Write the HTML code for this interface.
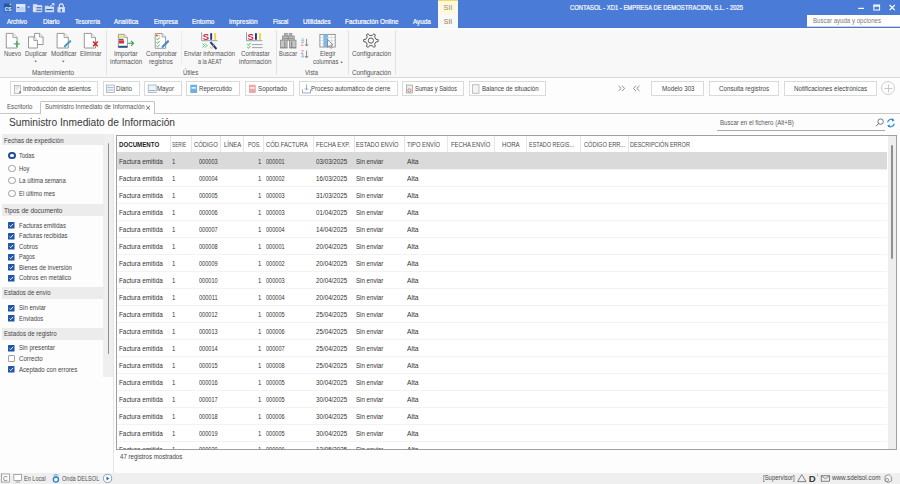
<!DOCTYPE html>
<html><head><meta charset="utf-8"><style>
html,body{margin:0;padding:0;}
body{width:900px;height:484px;overflow:hidden;position:relative;background:#fdfdfd;font-family:"Liberation Sans", sans-serif;}
.t{position:absolute;white-space:pre;line-height:1;transform-origin:0 0;}
svg{position:absolute;overflow:visible}
</style></head><body>
<div style="position:absolute;left:0px;top:0px;width:900px;height:27.5px;background:#4a7bd6"></div><div style="position:absolute;left:438.3px;top:0px;width:19.5px;height:1.2px;background:#f3d65a"></div><div style="position:absolute;left:438.3px;top:1.2px;width:19.5px;height:13.8px;background:#fdf8e2"></div><div style="position:absolute;left:438.3px;top:15px;width:19.5px;height:13px;background:#f9f9f9"></div><div style="position:absolute;left:807px;top:15px;width:93px;height:12px;background:#fff;border-bottom:1px solid #d0d0d0;box-sizing:border-box"></div><div style="position:absolute;left:0px;top:27.5px;width:900px;height:49.5px;background:#f8f8f8"></div><div style="position:absolute;left:0px;top:27.5px;width:900px;height:2px;background:#fcfcfc"></div><div style="position:absolute;left:0px;top:77px;width:900px;height:1px;background:#d8d8d8"></div><div style="position:absolute;left:105.5px;top:30px;width:1px;height:45px;background:#e2e2e2"></div><div style="position:absolute;left:275.8px;top:30px;width:1px;height:45px;background:#e2e2e2"></div><div style="position:absolute;left:347.6px;top:30px;width:1px;height:45px;background:#e2e2e2"></div><div style="position:absolute;left:394.6px;top:30px;width:1px;height:45px;background:#e2e2e2"></div><div style="position:absolute;left:180.6px;top:31px;width:1px;height:33px;background:#ececec"></div><div style="position:absolute;left:10px;top:81.3px;width:88.2px;height:14.5px;background:#fff;border:1px solid #dadada;box-sizing:border-box"></div><div style="position:absolute;left:102.9px;top:81.3px;width:37.099999999999994px;height:14.5px;background:#fff;border:1px solid #dadada;box-sizing:border-box"></div><div style="position:absolute;left:144.4px;top:81.3px;width:37.400000000000006px;height:14.5px;background:#fff;border:1px solid #dadada;box-sizing:border-box"></div><div style="position:absolute;left:186.2px;top:81.3px;width:54.20000000000002px;height:14.5px;background:#fff;border:1px solid #dadada;box-sizing:border-box"></div><div style="position:absolute;left:244.9px;top:81.3px;width:49.49999999999997px;height:14.5px;background:#fff;border:1px solid #dadada;box-sizing:border-box"></div><div style="position:absolute;left:299.3px;top:81.3px;width:98.5px;height:14.5px;background:#fff;border:1px solid #dadada;box-sizing:border-box"></div><div style="position:absolute;left:402.2px;top:81.3px;width:62.19999999999999px;height:14.5px;background:#fff;border:1px solid #dadada;box-sizing:border-box"></div><div style="position:absolute;left:468.9px;top:81.3px;width:76.70000000000005px;height:14.5px;background:#fff;border:1px solid #dadada;box-sizing:border-box"></div><div style="position:absolute;left:651px;top:81.3px;width:53.299999999999955px;height:14.5px;background:#fff;border:1px solid #dadada;box-sizing:border-box"></div><div style="position:absolute;left:709px;top:81.3px;width:70.29999999999995px;height:14.5px;background:#fff;border:1px solid #dadada;box-sizing:border-box"></div><div style="position:absolute;left:783.7px;top:81.3px;width:93.0px;height:14.5px;background:#fff;border:1px solid #dadada;box-sizing:border-box"></div><div style="position:absolute;left:881px;top:81px;width:14px;height:14px;border:1px solid #cfcfcf;border-radius:50%;box-sizing:border-box"></div><div style="position:absolute;left:0px;top:113px;width:900px;height:1px;background:#c8c8c8"></div><div style="position:absolute;left:40.4px;top:101.2px;width:115px;height:12.8px;background:#fff;border:1px solid #c4c4c4;border-bottom:none;box-sizing:border-box;border-radius:1.5px 1.5px 0 0"></div><div style="position:absolute;left:716.7px;top:130px;width:168.2px;height:1px;background:#aaaaaa"></div><div style="position:absolute;left:113.3px;top:134px;width:1px;height:338.5px;background:#e6e6e6"></div><div style="position:absolute;left:103.4px;top:134px;width:9.9px;height:242.7px;background:#efefef"></div><div style="position:absolute;left:107.6px;top:142.8px;width:1.7px;height:211.7px;background:#909090;border-radius:1px"></div><div style="position:absolute;left:2px;top:133.9px;width:101.5px;height:11.5px;background:#ececec"></div><div style="position:absolute;left:2px;top:203.9px;width:101.5px;height:12.199999999999989px;background:#ececec"></div><div style="position:absolute;left:2px;top:286.9px;width:101.5px;height:12.200000000000045px;background:#ececec"></div><div style="position:absolute;left:2px;top:327.7px;width:101.5px;height:12.199999999999989px;background:#ececec"></div><div style="position:absolute;left:8.4px;top:151.9px;width:7.2px;height:7.2px;border-radius:50%;border:2.2px solid #1f4f9e;box-sizing:border-box;background:#fff"></div><div style="position:absolute;left:8.4px;top:164.8px;width:7.2px;height:7.2px;border-radius:50%;border:1px solid #9a9a9a;box-sizing:border-box;background:#fff"></div><div style="position:absolute;left:8.4px;top:177.20000000000002px;width:7.2px;height:7.2px;border-radius:50%;border:1px solid #9a9a9a;box-sizing:border-box;background:#fff"></div><div style="position:absolute;left:8.4px;top:190.1px;width:7.2px;height:7.2px;border-radius:50%;border:1px solid #9a9a9a;box-sizing:border-box;background:#fff"></div><svg style="left:8.4px;top:222.05px" width="6.5" height="6.5" viewBox="0 0 13 13"><rect x="0" y="0" width="13" height="13" rx="1" fill="#1f55a8"/><path d="M3 6.8 L5.5 9.2 L10 3.8" stroke="#fff" stroke-width="1.8" fill="none"/></svg><svg style="left:8.4px;top:232.75px" width="6.5" height="6.5" viewBox="0 0 13 13"><rect x="0" y="0" width="13" height="13" rx="1" fill="#1f55a8"/><path d="M3 6.8 L5.5 9.2 L10 3.8" stroke="#fff" stroke-width="1.8" fill="none"/></svg><svg style="left:8.4px;top:243.25px" width="6.5" height="6.5" viewBox="0 0 13 13"><rect x="0" y="0" width="13" height="13" rx="1" fill="#1f55a8"/><path d="M3 6.8 L5.5 9.2 L10 3.8" stroke="#fff" stroke-width="1.8" fill="none"/></svg><svg style="left:8.4px;top:253.75px" width="6.5" height="6.5" viewBox="0 0 13 13"><rect x="0" y="0" width="13" height="13" rx="1" fill="#1f55a8"/><path d="M3 6.8 L5.5 9.2 L10 3.8" stroke="#fff" stroke-width="1.8" fill="none"/></svg><svg style="left:8.4px;top:264.25px" width="6.5" height="6.5" viewBox="0 0 13 13"><rect x="0" y="0" width="13" height="13" rx="1" fill="#1f55a8"/><path d="M3 6.8 L5.5 9.2 L10 3.8" stroke="#fff" stroke-width="1.8" fill="none"/></svg><svg style="left:8.4px;top:274.75px" width="6.5" height="6.5" viewBox="0 0 13 13"><rect x="0" y="0" width="13" height="13" rx="1" fill="#1f55a8"/><path d="M3 6.8 L5.5 9.2 L10 3.8" stroke="#fff" stroke-width="1.8" fill="none"/></svg><svg style="left:8.4px;top:304.85px" width="6.5" height="6.5" viewBox="0 0 13 13"><rect x="0" y="0" width="13" height="13" rx="1" fill="#1f55a8"/><path d="M3 6.8 L5.5 9.2 L10 3.8" stroke="#fff" stroke-width="1.8" fill="none"/></svg><svg style="left:8.4px;top:315.45px" width="6.5" height="6.5" viewBox="0 0 13 13"><rect x="0" y="0" width="13" height="13" rx="1" fill="#1f55a8"/><path d="M3 6.8 L5.5 9.2 L10 3.8" stroke="#fff" stroke-width="1.8" fill="none"/></svg><svg style="left:8.4px;top:344.85px" width="6.5" height="6.5" viewBox="0 0 13 13"><rect x="0" y="0" width="13" height="13" rx="1" fill="#1f55a8"/><path d="M3 6.8 L5.5 9.2 L10 3.8" stroke="#fff" stroke-width="1.8" fill="none"/></svg><div style="position:absolute;left:8.4px;top:355.25px;width:6.5px;height:6.5px;border:1px solid #a0a0a0;box-sizing:border-box;background:#fff;border-radius:1px"></div><svg style="left:8.4px;top:366.05px" width="6.5" height="6.5" viewBox="0 0 13 13"><rect x="0" y="0" width="13" height="13" rx="1" fill="#1f55a8"/><path d="M3 6.8 L5.5 9.2 L10 3.8" stroke="#fff" stroke-width="1.8" fill="none"/></svg><div style="position:absolute;left:115.8px;top:134.8px;width:781px;height:315px;background:#fff;border:1px solid #a0a0a0;box-sizing:border-box"></div><div style="position:absolute;left:887.5px;top:135.8px;width:8.3px;height:313px;background:#eeeeee"></div><div style="position:absolute;left:891.2px;top:144.8px;width:1.7px;height:113.8px;background:#909090;border-radius:1px"></div><div style="position:absolute;left:169.6px;top:136px;width:1px;height:16px;background:#e6e6e6"></div><div style="position:absolute;left:190.6px;top:136px;width:1px;height:16px;background:#e6e6e6"></div><div style="position:absolute;left:220.2px;top:136px;width:1px;height:16px;background:#e6e6e6"></div><div style="position:absolute;left:243.4px;top:136px;width:1px;height:16px;background:#e6e6e6"></div><div style="position:absolute;left:262.9px;top:136px;width:1px;height:16px;background:#e6e6e6"></div><div style="position:absolute;left:313.3px;top:136px;width:1px;height:16px;background:#e6e6e6"></div><div style="position:absolute;left:354px;top:136px;width:1px;height:16px;background:#e6e6e6"></div><div style="position:absolute;left:404px;top:136px;width:1px;height:16px;background:#e6e6e6"></div><div style="position:absolute;left:447.1px;top:136px;width:1px;height:16px;background:#e6e6e6"></div><div style="position:absolute;left:494.4px;top:136px;width:1px;height:16px;background:#e6e6e6"></div><div style="position:absolute;left:526.2px;top:136px;width:1px;height:16px;background:#e6e6e6"></div><div style="position:absolute;left:579.6px;top:136px;width:1px;height:16px;background:#e6e6e6"></div><div style="position:absolute;left:627.8px;top:136px;width:1px;height:16px;background:#e6e6e6"></div><div style="position:absolute;left:117.3px;top:152px;width:770.2px;height:1px;background:#e8e8e8"></div><div style="position:absolute;left:117.3px;top:152.3px;width:770.2px;height:17px;background:#dadada"></div><div style="position:absolute;left:117.3px;top:169.3px;width:770.2px;height:1px;background:#f3f3f3"></div><div style="position:absolute;left:117.3px;top:186.3px;width:770.2px;height:1px;background:#f3f3f3"></div><div style="position:absolute;left:117.3px;top:203.3px;width:770.2px;height:1px;background:#f3f3f3"></div><div style="position:absolute;left:117.3px;top:220.3px;width:770.2px;height:1px;background:#f3f3f3"></div><div style="position:absolute;left:117.3px;top:237.3px;width:770.2px;height:1px;background:#f3f3f3"></div><div style="position:absolute;left:117.3px;top:254.3px;width:770.2px;height:1px;background:#f3f3f3"></div><div style="position:absolute;left:117.3px;top:271.3px;width:770.2px;height:1px;background:#f3f3f3"></div><div style="position:absolute;left:117.3px;top:288.3px;width:770.2px;height:1px;background:#f3f3f3"></div><div style="position:absolute;left:117.3px;top:305.3px;width:770.2px;height:1px;background:#f3f3f3"></div><div style="position:absolute;left:117.3px;top:322.3px;width:770.2px;height:1px;background:#f3f3f3"></div><div style="position:absolute;left:117.3px;top:339.3px;width:770.2px;height:1px;background:#f3f3f3"></div><div style="position:absolute;left:117.3px;top:356.3px;width:770.2px;height:1px;background:#f3f3f3"></div><div style="position:absolute;left:117.3px;top:373.3px;width:770.2px;height:1px;background:#f3f3f3"></div><div style="position:absolute;left:117.3px;top:390.3px;width:770.2px;height:1px;background:#f3f3f3"></div><div style="position:absolute;left:117.3px;top:407.3px;width:770.2px;height:1px;background:#f3f3f3"></div><div style="position:absolute;left:117.3px;top:424.3px;width:770.2px;height:1px;background:#f3f3f3"></div><div style="position:absolute;left:117.3px;top:441.3px;width:770.2px;height:1px;background:#f3f3f3"></div><div style="position:absolute;left:0px;top:472.5px;width:900px;height:11.5px;background:#efefef"></div><svg style="left:0;top:0" width="900" height="484" viewBox="0 0 900 484"><path d="M6.3 33.4 H12.900000000000002 L17.1 37.6 V48 H6.3 Z" fill="#fff" stroke="#858585" stroke-width="0.85"/><path d="M12.900000000000002 33.4 V37.6 H17.1" fill="#f0f0f0" stroke="#858585" stroke-width="0.7"/><path d="M16.8 40.9 V46.9 M13.8 43.9 H19.8" stroke="#4aa86a" stroke-width="1.4"/><path d="M34.6 33.4 H39.5 L43.1 37.0 V44.5 H34.6 Z" fill="#fff" stroke="#858585" stroke-width="0.85"/><path d="M39.5 33.4 V37.0 H43.1" fill="#f0f0f0" stroke="#858585" stroke-width="0.7"/><path d="M28.5 36.9 H33.8 L37.4 40.5 V48 H28.5 Z" fill="#fff" stroke="#858585" stroke-width="0.85"/><path d="M33.8 36.9 V40.5 H37.4" fill="#f0f0f0" stroke="#858585" stroke-width="0.7"/><path d="M57.1 33.4 H64.1 L68.3 37.6 V48 H57.1 Z" fill="#fff" stroke="#858585" stroke-width="0.85"/><path d="M64.1 33.4 V37.6 H68.3" fill="#f0f0f0" stroke="#858585" stroke-width="0.7"/><path d="M64.9 46.3 L70.2 41.2" stroke="#4a9ac8" stroke-width="2.2" stroke-linecap="round"/><path d="M84.3 33.4 H91.3 L95.5 37.6 V48 H84.3 Z" fill="#fff" stroke="#858585" stroke-width="0.85"/><path d="M91.3 33.4 V37.6 H95.5" fill="#f0f0f0" stroke="#858585" stroke-width="0.7"/><path d="M93 41.5 L97.8 46.3 M97.8 41.5 L93 46.3" stroke="#d0202a" stroke-width="1.5"/><path d="M118.4 34.4 H124.2 L127.4 37.6 V47.4 H118.4 Z" fill="#fff" stroke="#8a8a8a" stroke-width="0.85"/><path d="M124.2 34.4 V37.6 H127.4" fill="#f0f0f0" stroke="#8a8a8a" stroke-width="0.7"/><rect x="119" y="35.6" width="5.5" height="2" fill="#f3d64a"/><rect x="119" y="38.8" width="4.5" height="1" fill="#1d3e7a"/><rect x="119" y="40.3" width="5" height="3.2" fill="#d43040"/><rect x="118.4" y="45.8" width="9" height="1.8" fill="#1f5588"/><path d="M127.8 43.3 H133.6 M131 40.8 L133.6 43.3 L131 45.8" stroke="#3aa040" stroke-width="1.1" fill="none"/><path d="M155.2 33.5 H162.1 L165.6 37.0 V48.3 H155.2 Z" fill="#fff" stroke="#8a8a8a" stroke-width="0.85"/><path d="M162.1 33.5 V37.0 H165.6" fill="#f0f0f0" stroke="#8a8a8a" stroke-width="0.7"/><circle cx="156.9" cy="35.5" r="0.9" fill="#d03040"/><rect x="158.5" y="34.6" width="1.6" height="1.8" fill="#f0d040"/><path d="M156.4 38.8 L157.6 39.8 L159.6 37.599999999999994" stroke="#3a9a4a" stroke-width="0.9" fill="none"/><path d="M156.4 42.3 L157.6 43.3 L159.6 41.099999999999994" stroke="#3a9a4a" stroke-width="0.9" fill="none"/><path d="M156.4 45.8 L157.6 46.8 L159.6 44.599999999999994" stroke="#3a9a4a" stroke-width="0.9" fill="none"/><path d="M162.6 46.8 L168 41.4" stroke="#4a8ac8" stroke-width="2.2" stroke-linecap="round"/><path d="M201.7 32.4 V40.7 H217.5" stroke="#8aa0b8" stroke-width="1" fill="none"/><text x="202.79999999999998" y="40.0" font-family="Liberation Sans" font-weight="700" font-size="9.5" fill="#d42a3a">S</text><rect x="210.2" y="33.199999999999996" width="1.9" height="6.6" fill="#1d3a80"/><rect x="214.2" y="33.199999999999996" width="1.9" height="6.6" fill="#f2d43c"/><path d="M202.5 43.5 L204.5 45.5 L202.5 47.5 M205 43.5 L207 45.5 L205 47.5" stroke="#5ab05a" stroke-width="0.9" fill="none"/><path d="M210.5 42.2 L216.5 49" stroke="#1d3a80" stroke-width="2"/><path d="M213 47.5 Q210 49.5 210.3 46.5" stroke="#e0b040" stroke-width="0.8" fill="none"/><path d="M215.5 43 L211.5 48" stroke="#f0d060" stroke-width="0.6"/><path d="M246.5 32.4 V40.7 H262.3" stroke="#8aa0b8" stroke-width="1" fill="none"/><text x="247.6" y="40.0" font-family="Liberation Sans" font-weight="700" font-size="9.5" fill="#d42a3a">S</text><rect x="255" y="33.199999999999996" width="1.9" height="6.6" fill="#1d3a80"/><rect x="259" y="33.199999999999996" width="1.9" height="6.6" fill="#f2d43c"/><path d="M247.3 44.2 L248.5 45.2 L250.6 42.900000000000006" stroke="#3aa04a" stroke-width="0.9" fill="none"/><path d="M252 44.6 H262.5" stroke="#8a8a8a" stroke-width="0.8"/><path d="M247.3 47.2 L248.5 48.2 L250.6 45.900000000000006" stroke="#3aa04a" stroke-width="0.9" fill="none"/><path d="M252 47.6 H262.5" stroke="#8a8a8a" stroke-width="0.8"/><g fill="#c4c4c4" stroke="#8a8a8a" stroke-width="0.8"><rect x="284.6" y="33.4" width="2.6" height="2.6"/><rect x="289.2" y="33.4" width="2.6" height="2.6"/><rect x="282.4" y="36" width="5.6" height="4.2"/><rect x="288.6" y="36" width="5.6" height="4.2"/><rect x="280.5" y="40.2" width="6.6" height="7.8"/><rect x="289.6" y="40.2" width="6.4" height="7.8"/></g><g fill="#8a8a8a"><rect x="284.2" y="41.5" width="1.2" height="6"/><rect x="291" y="41.5" width="1.2" height="6"/><rect x="283" y="37.8" width="4.5" height="1"/><rect x="289.2" y="37.8" width="4.5" height="1"/><rect x="280.5" y="47.2" width="6.6" height="0.9"/><rect x="289.6" y="47.2" width="6.4" height="0.9"/></g><text x="300.9" y="42.4" font-family="Liberation Sans" font-size="4.6" fill="#5aa0d8">A</text><text x="301.1" y="46.4" font-family="Liberation Sans" font-size="4.6" fill="#e07070">Z</text><path d="M306.6 38.9 V46 M305 44.3 L306.6 46.1 L308.2 44.3" stroke="#666" stroke-width="0.75" fill="none"/><text x="301.1" y="54.2" font-family="Liberation Sans" font-size="4.6" fill="#e07070">Z</text><text x="300.9" y="58.2" font-family="Liberation Sans" font-size="4.6" fill="#5aa0d8">A</text><path d="M306.6 50.6 V57.7 M305 56 L306.6 57.8 L308.2 56" stroke="#666" stroke-width="0.75" fill="none"/><path d="M34.4 60.8 H37 L35.7 62.2 Z M62 60.8 H64.6 L63.3 62.2 Z M340.3 61.8 H342.9 L341.6 63.2 Z" fill="#555"/><rect x="319.9" y="34.4" width="15.3" height="12.6" fill="#fff" stroke="#8a8a8a" stroke-width="0.9"/><rect x="323.3" y="34.4" width="4.7" height="12.6" fill="#7ab6ea"/><path d="M319.9 37.5 H335.2" stroke="#b5c5d5" stroke-width="0.5"/><path d="M319.9 40.6 H335.2" stroke="#b5c5d5" stroke-width="0.5"/><path d="M319.9 43.8 H335.2" stroke="#b5c5d5" stroke-width="0.5"/><path d="M323.3 34.4 V47" stroke="#b5c5d5" stroke-width="0.5"/><path d="M328 34.4 V47" stroke="#b5c5d5" stroke-width="0.5"/><path d="M331.6 34.4 V47" stroke="#b5c5d5" stroke-width="0.5"/><path d="M327.6 39.6 V47.2 L329.4 45.6 L330.8 48.3 L332 47.7 L330.7 45.1 L333 45 Z" fill="#fff" stroke="#555" stroke-width="0.6"/><path d="M375.92 39.25 L378.13 39.56 L378.13 41.64 L375.92 41.95 L374.58 44.28 L375.41 46.34 L373.61 47.38 L372.25 45.62 L369.55 45.62 L368.19 47.38 L366.39 46.34 L367.22 44.28 L365.88 41.95 L363.67 41.64 L363.67 39.56 L365.88 39.25 L367.22 36.92 L366.39 34.86 L368.19 33.82 L369.55 35.58 L372.25 35.58 L373.61 33.82 L375.41 34.86 L374.58 36.92 Z" fill="none" stroke="#5a5a5a" stroke-width="1"/><circle cx="370.9" cy="40.6" r="2.6" fill="none" stroke="#5a5a5a" stroke-width="1"/></svg><svg style="left:0;top:0" width="900" height="484" viewBox="0 0 900 484"><rect x="3.9" y="3.6" width="7.8" height="7.8" rx="1.2" fill="#1c5aa6"/><text x="4.5" y="10.9" font-family="Liberation Sans" font-weight="700" font-size="6.4" fill="#e6f0ff">cs</text><circle cx="10.5" cy="4.6" r="1" fill="#f0c850"/><rect x="16.4" y="4.3" width="8.6" height="7.4" fill="#d3def5" stroke="#e6edfb" stroke-width="0.7"/><path d="M16.4 5.8 H25" stroke="#f2f6fd" stroke-width="1"/><path d="M16.6 8.2 H24.8 M16.6 10 H24.8 M19.3 6.5 V11.7 M22.2 6.5 V11.7" stroke="#a9bde6" stroke-width="0.45"/><rect x="17.2" y="7.1" width="2" height="0.9" fill="#2a58a8"/><path d="M27.2 6.4 H30 L28.6 8 Z" fill="#eef3fc"/><path d="M33.3 4.6 H36.8 L37.6 5.6 H41.8 V11.8 H33.3 Z" fill="#d3def5" stroke="#e6edfb" stroke-width="0.7"/><path d="M36.4 7.8 H41.4 M36.4 10.2 H41.4" stroke="#2d5cb0" stroke-width="1.1"/><path d="M34.2 8.2 V11" stroke="#f4f7fd" stroke-width="0.8"/><path d="M45.3 6.2 H48.2 L49 7 H53.6 V11.8 H45.3 Z" fill="#d3def5" stroke="#e6edfb" stroke-width="0.7"/><path d="M46.2 9.6 H52.8" stroke="#2d5cb0" stroke-width="1.1"/><path d="M49.8 6.6 L53.8 3.8 M52 3.6 H54 V5.6" stroke="#eef3fc" stroke-width="0.9" fill="none"/><path d="M59.3 7.6 V5.9 A2 2 0 0 1 63.3 5.9 V7.6" stroke="#e6edfb" stroke-width="1.1" fill="none"/><rect x="57.9" y="7.6" width="6.8" height="4.4" fill="#d3def5" stroke="#e6edfb" stroke-width="0.6"/><rect x="60.6" y="9.2" width="1.4" height="2.4" fill="#2d5cb0"/><path d="M858.2 8.4 H864" stroke="#ffffff" stroke-width="1.2"/><rect x="873.8" y="5" width="5.8" height="5" fill="none" stroke="#fff" stroke-width="1"/><path d="M873.8 6 H879.6" stroke="#fff" stroke-width="1.4"/><path d="M889.6 5 L894.8 10.2 M894.8 5 L889.6 10.2" stroke="#fff" stroke-width="1.2"/></svg><svg style="left:0;top:0" width="900" height="484" viewBox="0 0 900 484"><rect x="14.6" y="85.3" width="6" height="8.2" fill="#f6f6f6" stroke="#9a9a9a" stroke-width="0.6"/><path d="M15.5 87 H19.5 M15.5 89 H17.5" stroke="#aaa" stroke-width="0.5"/><circle cx="20" cy="92.2" r="1" fill="#3a9a5a"/><rect x="106.5" y="85" width="8" height="7.6" fill="#eef3f8" stroke="#8a9aaa" stroke-width="0.6"/><path d="M107.5 87.5 H113.5 M107.5 90 H113.5" stroke="#7aa0c8" stroke-width="0.6"/><rect x="148.2" y="85" width="8" height="7.6" fill="#eef3f8" stroke="#8a9aaa" stroke-width="0.6"/><path d="M149.2 90.5 H155.2" stroke="#7aa0c8" stroke-width="0.8"/><rect x="190.3" y="84.8" width="6.8" height="8.2" rx="0.6" fill="#6ab0e2"/><rect x="191.5" y="87.2" width="4.4" height="1.4" fill="#fff"/><rect x="249" y="84.8" width="6.8" height="8.2" rx="0.6" fill="#eca8a8"/><rect x="250.2" y="87.2" width="4.4" height="1.4" fill="#fff"/><path d="M302.5 89.5 V93 H310.5 V89.5 M306.5 84.5 V90 M304.8 88.3 L306.5 90 L308.2 88.3" stroke="#6a8ab0" stroke-width="0.7" fill="none"/><rect x="406.5" y="85" width="5.8" height="8" fill="#eee" stroke="#888" stroke-width="0.6"/><circle cx="409.4" cy="90.4" r="1.6" fill="none" stroke="#c04040" stroke-width="0.6"/><rect x="472.5" y="84.8" width="6.5" height="8.4" fill="#f4f4f4" stroke="#999" stroke-width="0.6"/><path d="M618.5 85.8 L621.2 88.4 L618.5 91 M622 85.8 L624.7 88.4 L622 91" stroke="#8f8f8f" stroke-width="1" fill="none"/><path d="M636 85.8 L633.3 88.4 L636 91 M639.5 85.8 L636.8 88.4 L639.5 91" stroke="#8f8f8f" stroke-width="1" fill="none"/><path d="M888.5 84.5 V92.5 M884.5 88.5 H892.5" stroke="#bdbdbd" stroke-width="0.8"/><path d="M146.2 105.8 L150 109.6 M150 105.8 L146.2 109.6" stroke="#444" stroke-width="0.8"/><circle cx="880.6" cy="121.6" r="2.7" fill="none" stroke="#555" stroke-width="0.8"/><path d="M878.6 123.6 L876 126.2" stroke="#555" stroke-width="0.9"/><path d="M887.6 122.4 A3.6 3.6 0 0 1 893.6 120.2 M894.2 123.6 A3.6 3.6 0 0 1 888.2 125.8" stroke="#2a8ad0" stroke-width="1.2" fill="none"/><path d="M892.2 118.6 L894.6 120.6 L892 121.6 Z M889.6 127.4 L887.2 125.4 L889.8 124.4 Z" fill="#2a8ad0"/></svg><svg style="left:0;top:0" width="900" height="484" viewBox="0 0 900 484"><rect x="1.6" y="474" width="8" height="8" fill="#fff" stroke="#888" stroke-width="0.7"/><text x="3" y="480.8" font-family="Liberation Sans" font-size="6.5" fill="#666">C</text><rect x="13.9" y="474.6" width="7.6" height="6" fill="#fff" stroke="#888" stroke-width="0.7"/><path d="M15.5 482 H20" stroke="#888" stroke-width="0.7"/><circle cx="55.9" cy="479.6" r="2.6" fill="none" stroke="#2a86c8" stroke-width="1.3"/><path d="M53.2 475.6 A3.6 3.6 0 0 1 58.6 475.6 M54.3 476.6 A2.2 2.2 0 0 1 57.5 476.6" stroke="#2a86c8" stroke-width="0.6" fill="none"/><circle cx="107.6" cy="478.4" r="4.1" fill="#fff" stroke="#5a7aa0" stroke-width="0.7"/><path d="M106.5 476.4 L109.4 478.4 L106.5 480.4 Z" fill="#2a6ab8"/><path d="M801.8 474.6 L806 481.6 H797.6 Z" fill="none" stroke="#555" stroke-width="0.7"/><text x="808.8" y="482.2" font-family="Liberation Sans" font-weight="700" font-size="9.6" fill="#3a3a3a">D</text><circle cx="817.4" cy="475" r="0.5" fill="#555"/><rect x="821.2" y="475.8" width="8.4" height="5.4" fill="none" stroke="#555" stroke-width="0.7"/><path d="M821.2 475.8 L825.4 478.8 L829.6 475.8" stroke="#555" stroke-width="0.6" fill="none"/><path d="M885 476 L889 474.5 L891.6 477 V481 L888 482.5 L885 481 Z" fill="none" stroke="#777" stroke-width="0.7"/><circle cx="887" cy="480" r="1.6" fill="none" stroke="#777" stroke-width="0.6"/></svg>
<span class="t" style="left:443.48px;top:4.04px;font-size:7.4px;color:#a08c50;transform:scaleX(1.0000);">SII</span><span class="t" style="left:443.72px;top:18.37px;font-size:7px;color:#8c7c48;transform:scaleX(1.0000);">SII</span><span class="t" style="left:813.00px;top:18.00px;font-size:6.5px;color:#7a7a7a;transform:scaleX(0.9361);">Buscar ayuda y opciones</span><span class="t" style="left:570.00px;top:4.74px;font-size:6.8px;color:#ffffff;transform:scaleX(0.8626);-webkit-text-stroke:0.2px #fff">CONTASOL - XD1 - EMPRESA DE DEMOSTRACION, S.L. - 2025</span><span class="t" style="left:7.30px;top:19.46px;font-size:6.9px;color:#ffffff;transform:scaleX(0.8745);-webkit-text-stroke:0.2px #fff">Archivo</span><span class="t" style="left:42.80px;top:19.46px;font-size:6.9px;color:#ffffff;transform:scaleX(0.9222);-webkit-text-stroke:0.2px #fff">Diario</span><span class="t" style="left:74.60px;top:19.46px;font-size:6.9px;color:#ffffff;transform:scaleX(0.8770);-webkit-text-stroke:0.2px #fff">Tesorería</span><span class="t" style="left:114.20px;top:19.46px;font-size:6.9px;color:#ffffff;transform:scaleX(0.9229);-webkit-text-stroke:0.2px #fff">Analítica</span><span class="t" style="left:153.50px;top:19.46px;font-size:6.9px;color:#ffffff;transform:scaleX(0.8630);-webkit-text-stroke:0.2px #fff">Empresa</span><span class="t" style="left:192.00px;top:19.46px;font-size:6.9px;color:#ffffff;transform:scaleX(0.9279);-webkit-text-stroke:0.2px #fff">Entorno</span><span class="t" style="left:229.20px;top:19.46px;font-size:6.9px;color:#ffffff;transform:scaleX(0.9450);-webkit-text-stroke:0.2px #fff">Impresión</span><span class="t" style="left:272.70px;top:19.46px;font-size:6.9px;color:#ffffff;transform:scaleX(0.8500);-webkit-text-stroke:0.2px #fff">Fiscal</span><span class="t" style="left:302.60px;top:19.46px;font-size:6.9px;color:#ffffff;transform:scaleX(0.9119);-webkit-text-stroke:0.2px #fff">Utilidades</span><span class="t" style="left:345.00px;top:19.46px;font-size:6.9px;color:#ffffff;transform:scaleX(0.9249);-webkit-text-stroke:0.2px #fff">Facturación Online</span><span class="t" style="left:413.30px;top:19.46px;font-size:6.9px;color:#ffffff;transform:scaleX(0.9216);-webkit-text-stroke:0.2px #fff">Ayuda</span><span class="t" style="left:3.90px;top:50.07px;font-size:7px;color:#555;transform:scaleX(0.8451);">Nuevo</span><span class="t" style="left:25.00px;top:50.07px;font-size:7px;color:#555;transform:scaleX(0.8564);">Duplicar</span><span class="t" style="left:50.70px;top:50.07px;font-size:7px;color:#555;transform:scaleX(0.9047);">Modificar</span><span class="t" style="left:80.00px;top:50.07px;font-size:7px;color:#555;transform:scaleX(0.8499);">Eliminar</span><span class="t" style="left:32.00px;top:68.77px;font-size:7px;color:#555;transform:scaleX(0.9146);">Mantenimiento</span><span class="t" style="left:114.00px;top:49.87px;font-size:7px;color:#555;transform:scaleX(0.9017);">Importar</span><span class="t" style="left:109.70px;top:57.97px;font-size:7px;color:#555;transform:scaleX(0.8898);">información</span><span class="t" style="left:145.60px;top:49.87px;font-size:7px;color:#555;transform:scaleX(0.8825);">Comprobar</span><span class="t" style="left:148.90px;top:57.97px;font-size:7px;color:#555;transform:scaleX(0.8866);">registros</span><span class="t" style="left:184.40px;top:49.87px;font-size:7px;color:#555;transform:scaleX(0.8798);">Enviar información</span><span class="t" style="left:197.60px;top:57.97px;font-size:7px;color:#555;transform:scaleX(0.7743);">a la AEAT</span><span class="t" style="left:240.70px;top:49.87px;font-size:7px;color:#555;transform:scaleX(0.8811);">Contrastar</span><span class="t" style="left:238.80px;top:57.97px;font-size:7px;color:#555;transform:scaleX(0.8981);">información</span><span class="t" style="left:183.40px;top:68.97px;font-size:7px;color:#555;transform:scaleX(0.8678);">Útiles</span><span class="t" style="left:279.40px;top:49.77px;font-size:7px;color:#555;transform:scaleX(0.8304);">Buscar</span><span class="t" style="left:320.30px;top:49.77px;font-size:7px;color:#555;transform:scaleX(0.8656);">Elegir</span><span class="t" style="left:312.60px;top:58.37px;font-size:7px;color:#555;transform:scaleX(0.8475);">columnas</span><span class="t" style="left:305.40px;top:68.57px;font-size:7px;color:#555;transform:scaleX(0.8421);">Vista</span><span class="t" style="left:351.60px;top:49.57px;font-size:7px;color:#555;transform:scaleX(0.9050);">Configuración</span><span class="t" style="left:351.60px;top:68.57px;font-size:7px;color:#555;transform:scaleX(0.9050);">Configuración</span><span class="t" style="left:22.70px;top:84.97px;font-size:7px;color:#444;transform:scaleX(0.8960);">Introducción de asientos</span><span class="t" style="left:115.70px;top:84.97px;font-size:7px;color:#444;transform:scaleX(0.8745);">Diario</span><span class="t" style="left:157.30px;top:84.97px;font-size:7px;color:#444;transform:scaleX(0.8739);">Mayor</span><span class="t" style="left:199.30px;top:84.97px;font-size:7px;color:#444;transform:scaleX(0.8742);">Repercutido</span><span class="t" style="left:257.70px;top:84.97px;font-size:7px;color:#444;transform:scaleX(0.8975);">Soportado</span><span class="t" style="left:311.40px;top:84.97px;font-size:7px;color:#444;transform:scaleX(0.8710);">Proceso automático de cierre</span><span class="t" style="left:414.80px;top:84.97px;font-size:7px;color:#444;transform:scaleX(0.8301);">Sumas y Saldos</span><span class="t" style="left:481.70px;top:84.97px;font-size:7px;color:#444;transform:scaleX(0.8760);">Balance de situación</span><span class="t" style="left:661.70px;top:84.97px;font-size:7px;color:#444;transform:scaleX(0.8909);">Modelo 303</span><span class="t" style="left:719.00px;top:84.97px;font-size:7px;color:#444;transform:scaleX(0.8862);">Consulta registros</span><span class="t" style="left:793.70px;top:84.97px;font-size:7px;color:#444;transform:scaleX(0.8808);">Notificaciones electrónicas</span><span class="t" style="left:6.70px;top:102.77px;font-size:7px;color:#555;transform:scaleX(0.8737);">Escritorio</span><span class="t" style="left:44.50px;top:102.87px;font-size:7px;color:#555;transform:scaleX(0.8746);">Suministro Inmediato de Información</span><span class="t" style="left:9.00px;top:118.33px;font-size:10px;color:#383838;transform:scaleX(1.0193);">Suministro Inmediato de Información</span><span class="t" style="left:720.00px;top:120.24px;font-size:6.8px;color:#5a5a5a;transform:scaleX(0.8900);">Buscar en el fichero (Alt+B)</span><span class="t" style="left:3.80px;top:136.97px;font-size:7px;color:#444;transform:scaleX(0.8751);">Fechas de expedición</span><span class="t" style="left:3.80px;top:206.67px;font-size:7px;color:#444;transform:scaleX(0.9245);">Tipos de documento</span><span class="t" style="left:3.80px;top:289.27px;font-size:7px;color:#444;transform:scaleX(0.8633);">Estados de envío</span><span class="t" style="left:3.80px;top:329.57px;font-size:7px;color:#444;transform:scaleX(0.8721);">Estados de registro</span><span class="t" style="left:18.70px;top:151.97px;font-size:7px;color:#444;transform:scaleX(0.8241);">Todas</span><span class="t" style="left:18.70px;top:164.87px;font-size:7px;color:#444;transform:scaleX(0.8351);">Hoy</span><span class="t" style="left:18.70px;top:177.27px;font-size:7px;color:#444;transform:scaleX(0.8450);">La última semana</span><span class="t" style="left:18.70px;top:190.17px;font-size:7px;color:#444;transform:scaleX(0.8568);">El último mes</span><span class="t" style="left:18.80px;top:221.67px;font-size:7px;color:#444;transform:scaleX(0.8489);">Facturas emitidas</span><span class="t" style="left:18.80px;top:232.37px;font-size:7px;color:#444;transform:scaleX(0.8496);">Facturas recibidas</span><span class="t" style="left:18.80px;top:242.87px;font-size:7px;color:#444;transform:scaleX(0.8327);">Cobros</span><span class="t" style="left:18.80px;top:253.37px;font-size:7px;color:#444;transform:scaleX(0.7956);">Pagos</span><span class="t" style="left:18.80px;top:263.87px;font-size:7px;color:#444;transform:scaleX(0.8675);">Bienes de inversión</span><span class="t" style="left:18.80px;top:274.37px;font-size:7px;color:#444;transform:scaleX(0.8638);">Cobros en metálico</span><span class="t" style="left:18.80px;top:304.47px;font-size:7px;color:#444;transform:scaleX(0.8638);">Sin enviar</span><span class="t" style="left:18.80px;top:315.07px;font-size:7px;color:#444;transform:scaleX(0.8369);">Enviados</span><span class="t" style="left:18.80px;top:344.47px;font-size:7px;color:#444;transform:scaleX(0.8621);">Sin presentar</span><span class="t" style="left:18.80px;top:354.87px;font-size:7px;color:#444;transform:scaleX(0.8792);">Correcto</span><span class="t" style="left:18.80px;top:365.67px;font-size:7px;color:#444;transform:scaleX(0.8710);">Aceptado con errores</span><span class="t" style="left:118.90px;top:141.07px;font-size:7px;color:#222;font-weight:700;transform:scaleX(0.8784);">DOCUMENTO</span><span class="t" style="left:172.20px;top:141.07px;font-size:7px;color:#4a4a4a;transform:scaleX(0.6804);">SERIE</span><span class="t" style="left:194.10px;top:141.07px;font-size:7px;color:#4a4a4a;transform:scaleX(0.8348);">CÓDIGO</span><span class="t" style="left:224.30px;top:141.07px;font-size:7px;color:#4a4a4a;transform:scaleX(0.8550);">LÍNEA</span><span class="t" style="left:248.00px;top:141.07px;font-size:7px;color:#4a4a4a;transform:scaleX(0.7649);">POS.</span><span class="t" style="left:266.00px;top:141.07px;font-size:7px;color:#4a4a4a;transform:scaleX(0.8371);">CÓD.FACTURA</span><span class="t" style="left:316.00px;top:141.07px;font-size:7px;color:#4a4a4a;transform:scaleX(0.8428);">FECHA EXP.</span><span class="t" style="left:356.00px;top:141.07px;font-size:7px;color:#4a4a4a;transform:scaleX(0.8173);">ESTADO ENVÍO</span><span class="t" style="left:406.70px;top:141.07px;font-size:7px;color:#4a4a4a;transform:scaleX(0.8237);">TIPO ENVÍO</span><span class="t" style="left:450.70px;top:141.07px;font-size:7px;color:#4a4a4a;transform:scaleX(0.8348);">FECHA ENVÍO</span><span class="t" style="left:501.70px;top:141.07px;font-size:7px;color:#4a4a4a;transform:scaleX(0.8698);">HORA</span><span class="t" style="left:529.00px;top:141.07px;font-size:7px;color:#4a4a4a;transform:scaleX(0.7782);">ESTADO REGIS...</span><span class="t" style="left:584.00px;top:141.07px;font-size:7px;color:#4a4a4a;transform:scaleX(0.8047);">CÓDIGO ERR...</span><span class="t" style="left:630.00px;top:141.07px;font-size:7px;color:#4a4a4a;transform:scaleX(0.7898);">DESCRIPCIÓN ERROR</span><span class="t" style="left:118.90px;top:158.07px;font-size:7px;color:#333;transform:scaleX(0.9057);">Factura emitida</span><span class="t" style="left:172.20px;top:158.07px;font-size:7px;color:#333;transform:scaleX(0.8500);">1</span><span class="t" style="left:199.20px;top:158.07px;font-size:7px;color:#333;transform:scaleX(0.7963);">000003</span><span class="t" style="left:257.68px;top:158.07px;font-size:7px;color:#333;transform:scaleX(0.8500);">1</span><span class="t" style="left:266.00px;top:158.07px;font-size:7px;color:#333;transform:scaleX(0.7963);">000001</span><span class="t" style="left:316.20px;top:158.07px;font-size:7px;color:#333;transform:scaleX(0.8902);">03/03/2025</span><span class="t" style="left:356.00px;top:158.07px;font-size:7px;color:#333;transform:scaleX(0.8767);">Sin enviar</span><span class="t" style="left:406.70px;top:158.07px;font-size:7px;color:#333;transform:scaleX(0.9534);">Alta</span><span class="t" style="left:118.90px;top:175.07px;font-size:7px;color:#333;transform:scaleX(0.9057);">Factura emitida</span><span class="t" style="left:172.20px;top:175.07px;font-size:7px;color:#333;transform:scaleX(0.8500);">1</span><span class="t" style="left:199.20px;top:175.07px;font-size:7px;color:#333;transform:scaleX(0.7963);">000004</span><span class="t" style="left:257.68px;top:175.07px;font-size:7px;color:#333;transform:scaleX(0.8500);">1</span><span class="t" style="left:266.00px;top:175.07px;font-size:7px;color:#333;transform:scaleX(0.7963);">000002</span><span class="t" style="left:316.20px;top:175.07px;font-size:7px;color:#333;transform:scaleX(0.8902);">16/03/2025</span><span class="t" style="left:356.00px;top:175.07px;font-size:7px;color:#333;transform:scaleX(0.8767);">Sin enviar</span><span class="t" style="left:406.70px;top:175.07px;font-size:7px;color:#333;transform:scaleX(0.9534);">Alta</span><span class="t" style="left:118.90px;top:192.07px;font-size:7px;color:#333;transform:scaleX(0.9057);">Factura emitida</span><span class="t" style="left:172.20px;top:192.07px;font-size:7px;color:#333;transform:scaleX(0.8500);">1</span><span class="t" style="left:199.20px;top:192.07px;font-size:7px;color:#333;transform:scaleX(0.7963);">000005</span><span class="t" style="left:257.68px;top:192.07px;font-size:7px;color:#333;transform:scaleX(0.8500);">1</span><span class="t" style="left:266.00px;top:192.07px;font-size:7px;color:#333;transform:scaleX(0.7963);">000003</span><span class="t" style="left:316.20px;top:192.07px;font-size:7px;color:#333;transform:scaleX(0.8902);">31/03/2025</span><span class="t" style="left:356.00px;top:192.07px;font-size:7px;color:#333;transform:scaleX(0.8767);">Sin enviar</span><span class="t" style="left:406.70px;top:192.07px;font-size:7px;color:#333;transform:scaleX(0.9534);">Alta</span><span class="t" style="left:118.90px;top:209.07px;font-size:7px;color:#333;transform:scaleX(0.9057);">Factura emitida</span><span class="t" style="left:172.20px;top:209.07px;font-size:7px;color:#333;transform:scaleX(0.8500);">1</span><span class="t" style="left:199.20px;top:209.07px;font-size:7px;color:#333;transform:scaleX(0.7963);">000006</span><span class="t" style="left:257.68px;top:209.07px;font-size:7px;color:#333;transform:scaleX(0.8500);">1</span><span class="t" style="left:266.00px;top:209.07px;font-size:7px;color:#333;transform:scaleX(0.7963);">000003</span><span class="t" style="left:316.20px;top:209.07px;font-size:7px;color:#333;transform:scaleX(0.8902);">01/04/2025</span><span class="t" style="left:356.00px;top:209.07px;font-size:7px;color:#333;transform:scaleX(0.8767);">Sin enviar</span><span class="t" style="left:406.70px;top:209.07px;font-size:7px;color:#333;transform:scaleX(0.9534);">Alta</span><span class="t" style="left:118.90px;top:226.07px;font-size:7px;color:#333;transform:scaleX(0.9057);">Factura emitida</span><span class="t" style="left:172.20px;top:226.07px;font-size:7px;color:#333;transform:scaleX(0.8500);">1</span><span class="t" style="left:199.20px;top:226.07px;font-size:7px;color:#333;transform:scaleX(0.7963);">000007</span><span class="t" style="left:257.68px;top:226.07px;font-size:7px;color:#333;transform:scaleX(0.8500);">1</span><span class="t" style="left:266.00px;top:226.07px;font-size:7px;color:#333;transform:scaleX(0.7963);">000004</span><span class="t" style="left:316.20px;top:226.07px;font-size:7px;color:#333;transform:scaleX(0.8902);">14/04/2025</span><span class="t" style="left:356.00px;top:226.07px;font-size:7px;color:#333;transform:scaleX(0.8767);">Sin enviar</span><span class="t" style="left:406.70px;top:226.07px;font-size:7px;color:#333;transform:scaleX(0.9534);">Alta</span><span class="t" style="left:118.90px;top:243.07px;font-size:7px;color:#333;transform:scaleX(0.9057);">Factura emitida</span><span class="t" style="left:172.20px;top:243.07px;font-size:7px;color:#333;transform:scaleX(0.8500);">1</span><span class="t" style="left:199.20px;top:243.07px;font-size:7px;color:#333;transform:scaleX(0.7963);">000008</span><span class="t" style="left:257.68px;top:243.07px;font-size:7px;color:#333;transform:scaleX(0.8500);">1</span><span class="t" style="left:266.00px;top:243.07px;font-size:7px;color:#333;transform:scaleX(0.7963);">000001</span><span class="t" style="left:316.20px;top:243.07px;font-size:7px;color:#333;transform:scaleX(0.8902);">20/04/2025</span><span class="t" style="left:356.00px;top:243.07px;font-size:7px;color:#333;transform:scaleX(0.8767);">Sin enviar</span><span class="t" style="left:406.70px;top:243.07px;font-size:7px;color:#333;transform:scaleX(0.9534);">Alta</span><span class="t" style="left:118.90px;top:260.07px;font-size:7px;color:#333;transform:scaleX(0.9057);">Factura emitida</span><span class="t" style="left:172.20px;top:260.07px;font-size:7px;color:#333;transform:scaleX(0.8500);">1</span><span class="t" style="left:199.20px;top:260.07px;font-size:7px;color:#333;transform:scaleX(0.7963);">000009</span><span class="t" style="left:257.68px;top:260.07px;font-size:7px;color:#333;transform:scaleX(0.8500);">1</span><span class="t" style="left:266.00px;top:260.07px;font-size:7px;color:#333;transform:scaleX(0.7963);">000002</span><span class="t" style="left:316.20px;top:260.07px;font-size:7px;color:#333;transform:scaleX(0.8902);">20/04/2025</span><span class="t" style="left:356.00px;top:260.07px;font-size:7px;color:#333;transform:scaleX(0.8767);">Sin enviar</span><span class="t" style="left:406.70px;top:260.07px;font-size:7px;color:#333;transform:scaleX(0.9534);">Alta</span><span class="t" style="left:118.90px;top:277.07px;font-size:7px;color:#333;transform:scaleX(0.9057);">Factura emitida</span><span class="t" style="left:172.20px;top:277.07px;font-size:7px;color:#333;transform:scaleX(0.8500);">1</span><span class="t" style="left:199.20px;top:277.07px;font-size:7px;color:#333;transform:scaleX(0.7963);">000010</span><span class="t" style="left:257.68px;top:277.07px;font-size:7px;color:#333;transform:scaleX(0.8500);">1</span><span class="t" style="left:266.00px;top:277.07px;font-size:7px;color:#333;transform:scaleX(0.7963);">000003</span><span class="t" style="left:316.20px;top:277.07px;font-size:7px;color:#333;transform:scaleX(0.8902);">20/04/2025</span><span class="t" style="left:356.00px;top:277.07px;font-size:7px;color:#333;transform:scaleX(0.8767);">Sin enviar</span><span class="t" style="left:406.70px;top:277.07px;font-size:7px;color:#333;transform:scaleX(0.9534);">Alta</span><span class="t" style="left:118.90px;top:294.07px;font-size:7px;color:#333;transform:scaleX(0.9057);">Factura emitida</span><span class="t" style="left:172.20px;top:294.07px;font-size:7px;color:#333;transform:scaleX(0.8500);">1</span><span class="t" style="left:199.20px;top:294.07px;font-size:7px;color:#333;transform:scaleX(0.8142);">000011</span><span class="t" style="left:257.68px;top:294.07px;font-size:7px;color:#333;transform:scaleX(0.8500);">1</span><span class="t" style="left:266.00px;top:294.07px;font-size:7px;color:#333;transform:scaleX(0.7963);">000004</span><span class="t" style="left:316.20px;top:294.07px;font-size:7px;color:#333;transform:scaleX(0.8902);">20/04/2025</span><span class="t" style="left:356.00px;top:294.07px;font-size:7px;color:#333;transform:scaleX(0.8767);">Sin enviar</span><span class="t" style="left:406.70px;top:294.07px;font-size:7px;color:#333;transform:scaleX(0.9534);">Alta</span><span class="t" style="left:118.90px;top:311.07px;font-size:7px;color:#333;transform:scaleX(0.9057);">Factura emitida</span><span class="t" style="left:172.20px;top:311.07px;font-size:7px;color:#333;transform:scaleX(0.8500);">1</span><span class="t" style="left:199.20px;top:311.07px;font-size:7px;color:#333;transform:scaleX(0.7963);">000012</span><span class="t" style="left:257.68px;top:311.07px;font-size:7px;color:#333;transform:scaleX(0.8500);">1</span><span class="t" style="left:266.00px;top:311.07px;font-size:7px;color:#333;transform:scaleX(0.7963);">000005</span><span class="t" style="left:316.20px;top:311.07px;font-size:7px;color:#333;transform:scaleX(0.8902);">25/04/2025</span><span class="t" style="left:356.00px;top:311.07px;font-size:7px;color:#333;transform:scaleX(0.8767);">Sin enviar</span><span class="t" style="left:406.70px;top:311.07px;font-size:7px;color:#333;transform:scaleX(0.9534);">Alta</span><span class="t" style="left:118.90px;top:328.07px;font-size:7px;color:#333;transform:scaleX(0.9057);">Factura emitida</span><span class="t" style="left:172.20px;top:328.07px;font-size:7px;color:#333;transform:scaleX(0.8500);">1</span><span class="t" style="left:199.20px;top:328.07px;font-size:7px;color:#333;transform:scaleX(0.7963);">000013</span><span class="t" style="left:257.68px;top:328.07px;font-size:7px;color:#333;transform:scaleX(0.8500);">1</span><span class="t" style="left:266.00px;top:328.07px;font-size:7px;color:#333;transform:scaleX(0.7963);">000006</span><span class="t" style="left:316.20px;top:328.07px;font-size:7px;color:#333;transform:scaleX(0.8902);">25/04/2025</span><span class="t" style="left:356.00px;top:328.07px;font-size:7px;color:#333;transform:scaleX(0.8767);">Sin enviar</span><span class="t" style="left:406.70px;top:328.07px;font-size:7px;color:#333;transform:scaleX(0.9534);">Alta</span><span class="t" style="left:118.90px;top:345.07px;font-size:7px;color:#333;transform:scaleX(0.9057);">Factura emitida</span><span class="t" style="left:172.20px;top:345.07px;font-size:7px;color:#333;transform:scaleX(0.8500);">1</span><span class="t" style="left:199.20px;top:345.07px;font-size:7px;color:#333;transform:scaleX(0.7963);">000014</span><span class="t" style="left:257.68px;top:345.07px;font-size:7px;color:#333;transform:scaleX(0.8500);">1</span><span class="t" style="left:266.00px;top:345.07px;font-size:7px;color:#333;transform:scaleX(0.7963);">000007</span><span class="t" style="left:316.20px;top:345.07px;font-size:7px;color:#333;transform:scaleX(0.8902);">25/04/2025</span><span class="t" style="left:356.00px;top:345.07px;font-size:7px;color:#333;transform:scaleX(0.8767);">Sin enviar</span><span class="t" style="left:406.70px;top:345.07px;font-size:7px;color:#333;transform:scaleX(0.9534);">Alta</span><span class="t" style="left:118.90px;top:362.07px;font-size:7px;color:#333;transform:scaleX(0.9057);">Factura emitida</span><span class="t" style="left:172.20px;top:362.07px;font-size:7px;color:#333;transform:scaleX(0.8500);">1</span><span class="t" style="left:199.20px;top:362.07px;font-size:7px;color:#333;transform:scaleX(0.7963);">000015</span><span class="t" style="left:257.68px;top:362.07px;font-size:7px;color:#333;transform:scaleX(0.8500);">1</span><span class="t" style="left:266.00px;top:362.07px;font-size:7px;color:#333;transform:scaleX(0.7963);">000008</span><span class="t" style="left:316.20px;top:362.07px;font-size:7px;color:#333;transform:scaleX(0.8902);">25/04/2025</span><span class="t" style="left:356.00px;top:362.07px;font-size:7px;color:#333;transform:scaleX(0.8767);">Sin enviar</span><span class="t" style="left:406.70px;top:362.07px;font-size:7px;color:#333;transform:scaleX(0.9534);">Alta</span><span class="t" style="left:118.90px;top:379.07px;font-size:7px;color:#333;transform:scaleX(0.9057);">Factura emitida</span><span class="t" style="left:172.20px;top:379.07px;font-size:7px;color:#333;transform:scaleX(0.8500);">1</span><span class="t" style="left:199.20px;top:379.07px;font-size:7px;color:#333;transform:scaleX(0.7963);">000016</span><span class="t" style="left:257.68px;top:379.07px;font-size:7px;color:#333;transform:scaleX(0.8500);">1</span><span class="t" style="left:266.00px;top:379.07px;font-size:7px;color:#333;transform:scaleX(0.7963);">000005</span><span class="t" style="left:316.20px;top:379.07px;font-size:7px;color:#333;transform:scaleX(0.8902);">30/04/2025</span><span class="t" style="left:356.00px;top:379.07px;font-size:7px;color:#333;transform:scaleX(0.8767);">Sin enviar</span><span class="t" style="left:406.70px;top:379.07px;font-size:7px;color:#333;transform:scaleX(0.9534);">Alta</span><span class="t" style="left:118.90px;top:396.07px;font-size:7px;color:#333;transform:scaleX(0.9057);">Factura emitida</span><span class="t" style="left:172.20px;top:396.07px;font-size:7px;color:#333;transform:scaleX(0.8500);">1</span><span class="t" style="left:199.20px;top:396.07px;font-size:7px;color:#333;transform:scaleX(0.7963);">000017</span><span class="t" style="left:257.68px;top:396.07px;font-size:7px;color:#333;transform:scaleX(0.8500);">1</span><span class="t" style="left:266.00px;top:396.07px;font-size:7px;color:#333;transform:scaleX(0.7963);">000005</span><span class="t" style="left:316.20px;top:396.07px;font-size:7px;color:#333;transform:scaleX(0.8902);">30/04/2025</span><span class="t" style="left:356.00px;top:396.07px;font-size:7px;color:#333;transform:scaleX(0.8767);">Sin enviar</span><span class="t" style="left:406.70px;top:396.07px;font-size:7px;color:#333;transform:scaleX(0.9534);">Alta</span><span class="t" style="left:118.90px;top:413.07px;font-size:7px;color:#333;transform:scaleX(0.9057);">Factura emitida</span><span class="t" style="left:172.20px;top:413.07px;font-size:7px;color:#333;transform:scaleX(0.8500);">1</span><span class="t" style="left:199.20px;top:413.07px;font-size:7px;color:#333;transform:scaleX(0.7963);">000018</span><span class="t" style="left:257.68px;top:413.07px;font-size:7px;color:#333;transform:scaleX(0.8500);">1</span><span class="t" style="left:266.00px;top:413.07px;font-size:7px;color:#333;transform:scaleX(0.7963);">000006</span><span class="t" style="left:316.20px;top:413.07px;font-size:7px;color:#333;transform:scaleX(0.8902);">30/04/2025</span><span class="t" style="left:356.00px;top:413.07px;font-size:7px;color:#333;transform:scaleX(0.8767);">Sin enviar</span><span class="t" style="left:406.70px;top:413.07px;font-size:7px;color:#333;transform:scaleX(0.9534);">Alta</span><span class="t" style="left:118.90px;top:430.07px;font-size:7px;color:#333;transform:scaleX(0.9057);">Factura emitida</span><span class="t" style="left:172.20px;top:430.07px;font-size:7px;color:#333;transform:scaleX(0.8500);">1</span><span class="t" style="left:199.20px;top:430.07px;font-size:7px;color:#333;transform:scaleX(0.7963);">000019</span><span class="t" style="left:257.68px;top:430.07px;font-size:7px;color:#333;transform:scaleX(0.8500);">1</span><span class="t" style="left:266.00px;top:430.07px;font-size:7px;color:#333;transform:scaleX(0.7963);">000005</span><span class="t" style="left:316.20px;top:430.07px;font-size:7px;color:#333;transform:scaleX(0.8902);">30/04/2025</span><span class="t" style="left:356.00px;top:430.07px;font-size:7px;color:#333;transform:scaleX(0.8767);">Sin enviar</span><span class="t" style="left:406.70px;top:430.07px;font-size:7px;color:#333;transform:scaleX(0.9534);">Alta</span><span class="t" style="left:118.90px;top:446.37px;font-size:7px;color:#333;transform:scaleX(0.9057);clip-path:inset(0 0 4.1px 0)">Factura emitida</span><span class="t" style="left:172.20px;top:446.37px;font-size:7px;color:#333;transform:scaleX(0.8500);clip-path:inset(0 0 4.1px 0)">1</span><span class="t" style="left:199.20px;top:446.37px;font-size:7px;color:#333;transform:scaleX(0.7963);clip-path:inset(0 0 4.1px 0)">000020</span><span class="t" style="left:257.68px;top:446.37px;font-size:7px;color:#333;transform:scaleX(0.8500);clip-path:inset(0 0 4.1px 0)">1</span><span class="t" style="left:266.00px;top:446.37px;font-size:7px;color:#333;transform:scaleX(0.7963);clip-path:inset(0 0 4.1px 0)">000009</span><span class="t" style="left:316.20px;top:446.37px;font-size:7px;color:#333;transform:scaleX(0.8902);clip-path:inset(0 0 4.1px 0)">12/05/2025</span><span class="t" style="left:356.00px;top:446.37px;font-size:7px;color:#333;transform:scaleX(0.8767);clip-path:inset(0 0 4.1px 0)">Sin enviar</span><span class="t" style="left:406.70px;top:446.37px;font-size:7px;color:#333;transform:scaleX(0.9534);clip-path:inset(0 0 4.1px 0)">Alta</span><span class="t" style="left:120.30px;top:453.17px;font-size:7px;color:#444;transform:scaleX(0.8750);">47 registros mostrados</span><span class="t" style="left:23.80px;top:475.37px;font-size:7px;color:#555;transform:scaleX(0.7963);">En Local</span><span class="t" style="left:62.40px;top:475.37px;font-size:7px;color:#555;transform:scaleX(0.7987);">Onda DELSOL</span><span class="t" style="left:762.70px;top:475.44px;font-size:6.8px;color:#4a4a4a;transform:scaleX(0.8713);">[Supervisor]</span><span class="t" style="left:832.30px;top:475.44px;font-size:6.8px;color:#4a4a4a;transform:scaleX(0.9285);">www.sdelsol.com</span>
</body></html>
